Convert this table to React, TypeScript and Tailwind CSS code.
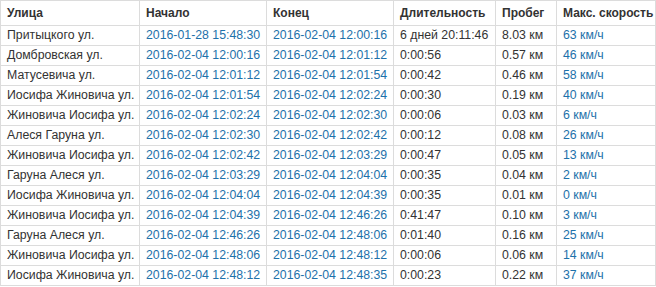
const rows = [
	['Притыцкого ул.', '2016-01-28 15:48:30', '2016-02-04 12:00:16', '6 дней 20:11:46', '8.03 км', '63 км/ч'],
	['Домбровская ул.', '2016-02-04 12:00:16', '2016-02-04 12:01:12', '0:00:56', '0.57 км', '46 км/ч'],
	['Матусевича ул.', '2016-02-04 12:01:12', '2016-02-04 12:01:54', '0:00:42', '0.46 км', '58 км/ч'],
	['Иосифа Жиновича ул.', '2016-02-04 12:01:54', '2016-02-04 12:02:24', '0:00:30', '0.19 км', '40 км/ч'],
	['Жиновича Иосифа ул.', '2016-02-04 12:02:24', '2016-02-04 12:02:30', '0:00:06', '0.03 км', '6 км/ч'],
	['Алеся Гаруна ул.', '2016-02-04 12:02:30', '2016-02-04 12:02:42', '0:00:12', '0.08 км', '26 км/ч'],
	['Жиновича Иосифа ул.', '2016-02-04 12:02:42', '2016-02-04 12:03:29', '0:00:47', '0.05 км', '13 км/ч'],
	['Гаруна Алеся ул.', '2016-02-04 12:03:29', '2016-02-04 12:04:04', '0:00:35', '0.04 км', '2 км/ч'],
	['Иосифа Жиновича ул.', '2016-02-04 12:04:04', '2016-02-04 12:04:39', '0:00:35', '0.01 км', '0 км/ч'],
	['Жиновича Иосифа ул.', '2016-02-04 12:04:39', '2016-02-04 12:46:26', '0:41:47', '0.10 км', '3 км/ч'],
	['Гаруна Алеся ул.', '2016-02-04 12:46:26', '2016-02-04 12:48:06', '0:01:40', '0.16 км', '25 км/ч'],
	['Жиновича Иосифа ул.', '2016-02-04 12:48:06', '2016-02-04 12:48:12', '0:00:06', '0.06 км', '14 км/ч'],
	['Иосифа Жиновича ул.', '2016-02-04 12:48:12', '2016-02-04 12:48:35', '0:00:23', '0.22 км', '37 км/ч'],
];

const headers = ['Улица', 'Начало', 'Конец', 'Длительность', 'Пробег', 'Макс. скорость'];
const widths = ['w-[139px]', 'w-[127px]', 'w-[127px]', 'w-[102px]', 'w-[61px]', 'w-[99px]'];
// columns 1, 2 and 5 are links
const linkCols = [1, 2, 5];

const App = () => {
	return (
		<div className="bg-white w-[656px] h-[287px] overflow-hidden font-['Liberation_Sans',Arial,sans-serif] text-[#333]">
			<table className="table-fixed border-collapse w-[655px]">
				<colgroup>
					{widths.map((w, i) => (
						<col key={i} className={w} />
					))}
				</colgroup>
				<thead>
					<tr className="h-[25px]">
						{headers.map((h) => (
							<th
								key={h}
								className="border border-[#dcdcdc] px-[6px] text-left font-bold text-[12px] whitespace-nowrap"
							>
								{h}
							</th>
						))}
					</tr>
				</thead>
				<tbody>
					{rows.map((r, ri) => (
						<tr key={ri} className="h-[20px]">
							{r.map((c, ci) => (
								<td
									key={ci}
									className={
										'border border-[#dcdcdc] px-[6px] py-0 whitespace-nowrap text-[12.3px] ' +
										(linkCols.includes(ci) ? 'text-[#1d71aa]' : '')
									}
								>
									{c}
								</td>
							))}
						</tr>
					))}
				</tbody>
			</table>
		</div>
	);
};

export default App;
